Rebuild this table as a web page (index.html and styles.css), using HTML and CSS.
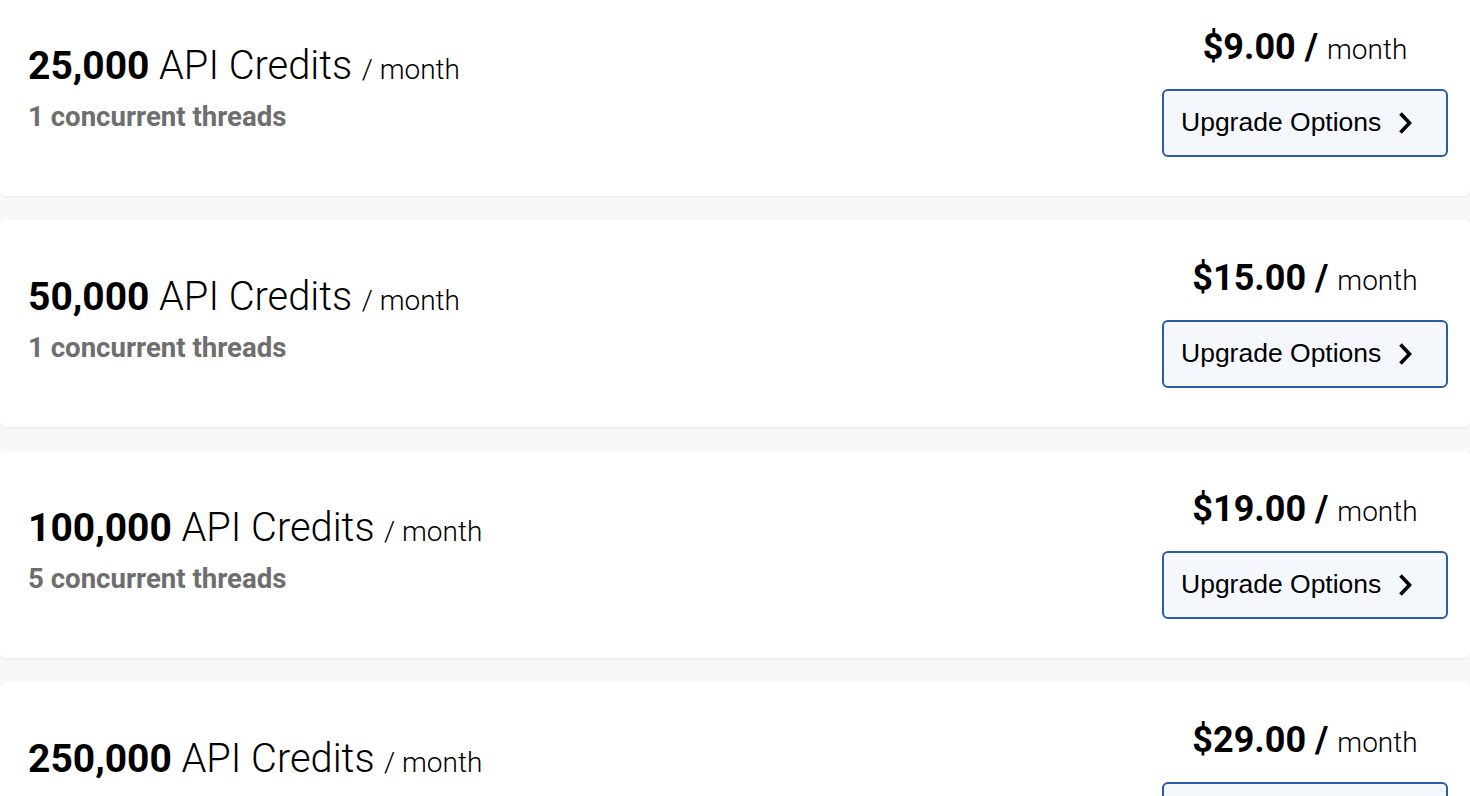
FILE: index.html
```html
<!DOCTYPE html>
<html lang="en">
<head>
<meta charset="utf-8">
<title>API Credit Plans</title>
<link rel="stylesheet" href="styles.css">
</head>
<body>
<main class="plans">
  <section class="plan">
    <div class="plan-info">
      <h2 class="plan-title"><strong>25,000</strong> <span class="light">API Credits</span> <span class="per">/ month</span></h2>
      <p class="plan-threads">1 concurrent threads</p>
    </div>
    <div class="plan-action">
      <div class="price"><span class="amount">$9.00 /</span> <span class="price-per">month</span></div>
      <button class="upgrade">Upgrade Options
        <svg class="chev" width="18" height="26" viewBox="0 0 18 26"><path d="M3.5 3.5 L12.5 13 L3.5 22.5" fill="none" stroke="#000" stroke-width="3.6"/></svg>
      </button>
    </div>
  </section>
  <section class="plan">
    <div class="plan-info">
      <h2 class="plan-title"><strong>50,000</strong> <span class="light">API Credits</span> <span class="per">/ month</span></h2>
      <p class="plan-threads">1 concurrent threads</p>
    </div>
    <div class="plan-action">
      <div class="price"><span class="amount">$15.00 /</span> <span class="price-per">month</span></div>
      <button class="upgrade">Upgrade Options
        <svg class="chev" width="18" height="26" viewBox="0 0 18 26"><path d="M3.5 3.5 L12.5 13 L3.5 22.5" fill="none" stroke="#000" stroke-width="3.6"/></svg>
      </button>
    </div>
  </section>
  <section class="plan">
    <div class="plan-info">
      <h2 class="plan-title"><strong>100,000</strong> <span class="light">API Credits</span> <span class="per">/ month</span></h2>
      <p class="plan-threads">5 concurrent threads</p>
    </div>
    <div class="plan-action">
      <div class="price"><span class="amount">$19.00 /</span> <span class="price-per">month</span></div>
      <button class="upgrade">Upgrade Options
        <svg class="chev" width="18" height="26" viewBox="0 0 18 26"><path d="M3.5 3.5 L12.5 13 L3.5 22.5" fill="none" stroke="#000" stroke-width="3.6"/></svg>
      </button>
    </div>
  </section>
  <section class="plan">
    <div class="plan-info">
      <h2 class="plan-title"><strong>250,000</strong> <span class="light">API Credits</span> <span class="per">/ month</span></h2>
      <p class="plan-threads">10 concurrent threads</p>
    </div>
    <div class="plan-action">
      <div class="price"><span class="amount">$29.00 /</span> <span class="price-per">month</span></div>
      <button class="upgrade">Upgrade Options
        <svg class="chev" width="18" height="26" viewBox="0 0 18 26"><path d="M3.5 3.5 L12.5 13 L3.5 22.5" fill="none" stroke="#000" stroke-width="3.6"/></svg>
      </button>
    </div>
  </section>
</main>
</body>
</html>
```

FILE: styles.css
```css
* { box-sizing: border-box; }

html, body {
  margin: 0;
  padding: 0;
  background: #f8f8f8;
  font-family: Roboto, "Liberation Sans", Arial, sans-serif;
  color: #000;
}

.plans {
  display: flex;
  flex-direction: column;
  gap: 24px;
  margin-top: -11px;
}

.plan {
  display: flex;
  align-items: center;
  justify-content: space-between;
  height: 207px;
  padding: 0 22px 0 28px;
  background: #fff;
  border-radius: 6px;
  box-shadow: 0 1px 3px rgba(0, 0, 0, 0.06);
}

.plan-info {
  display: flex;
  flex-direction: column;
  gap: 7px;
  margin-top: -10px;
}

.plan-title {
  margin: 0;
  font-size: 39px;
  font-weight: 300;
  line-height: 47px;
  white-space: nowrap;
}

.plan-title strong {
  font-weight: 700;
}

.plan-title .light {
  font-size: 39.8px;
}

.plan-title .per {
  font-size: 28px;
  font-weight: 300;
}

.plan-threads {
  margin: 0;
  font-size: 27.6px;
  font-weight: 700;
  line-height: 33px;
  color: #6e6e6e;
}

.plan-action {
  display: flex;
  flex-direction: column;
  align-items: center;
  gap: 17px;
  margin-top: -4px;
}

.price {
  font-size: 36px;
  line-height: 44px;
  white-space: nowrap;
}

.price .amount {
  font-weight: 700;
}

.price .price-per {
  font-size: 28px;
  font-weight: 300;
}

.upgrade {
  display: flex;
  align-items: center;
  gap: 16px;
  width: 286px;
  height: 68px;
  padding: 0 0 0 17px;
  background: #f4f8fc;
  border: 2px solid #2c5ba8;
  border-radius: 6px;
  font-family: "Liberation Sans", Arial, sans-serif;
  font-size: 26.5px;
  color: #000;
  cursor: pointer;
}

.chev {
  display: block;
  flex: none;
}
```
